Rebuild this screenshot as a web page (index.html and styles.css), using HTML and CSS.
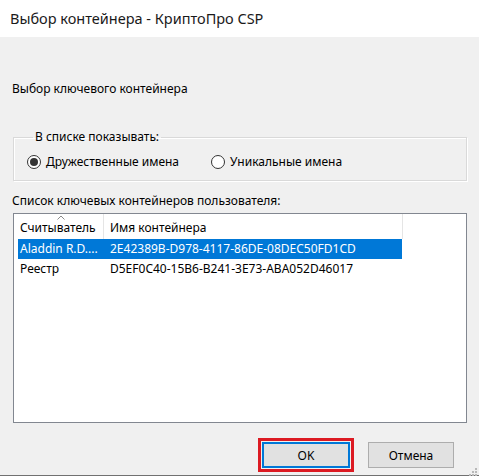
FILE: index.html
```html
<!DOCTYPE html>
<html lang="ru">
<head>
<meta charset="utf-8">
<title>Выбор контейнера</title>
<link rel="stylesheet" href="styles.css">
</head>
<body>
<div class="window">
  <div class="titlebar">Выбор контейнера - КриптоПро CSP</div>
  <div class="main">
    <div class="heading">Выбор ключевого контейнера</div>
    <fieldset class="group">
      <legend class="legend">В списке показывать:</legend>
      <div class="options">
        <div class="option"><span class="radio checked"></span><span>Дружественные имена</span></div>
        <div class="option"><span class="radio"></span><span>Уникальные имена</span></div>
      </div>
    </fieldset>
    <div class="list-label">Список ключевых контейнеров пользователя:</div>
    <div class="listbox">
      <div class="list-header">
        <div class="hcell c1">
          <svg class="sort" width="8" height="5" viewBox="0 0 8 5"><polyline points="0.5,4.5 4,1 7.5,4.5" fill="none" stroke="#8a8a8a" stroke-width="1"/></svg>
          Считыватель
        </div>
        <div class="hcell c2">Имя контейнера</div>
      </div>
      <div class="row selected"><div class="cell c1">Aladdin R.D....</div><div class="cell c2">2E42389B-D978-4117-86DE-08DEC50FD1CD</div></div>
      <div class="row"><div class="cell c1">Реестр</div><div class="cell c2">D5EF0C40-15B6-B241-3E73-ABA052D46017</div></div>
    </div>
    <div class="buttons">
      <button class="btn default">OK</button>
      <button class="btn">Отмена</button>
    </div>
  </div>
  <div class="grip">
    <svg width="10" height="10" viewBox="0 0 10 10">
      <rect x="7" y="1" width="2" height="2" fill="#b8b8b8"/>
      <rect x="4" y="4" width="2" height="2" fill="#b8b8b8"/>
      <rect x="7" y="4" width="2" height="2" fill="#b8b8b8"/>
      <rect x="1" y="7" width="2" height="2" fill="#b8b8b8"/>
      <rect x="4" y="7" width="2" height="2" fill="#b8b8b8"/>
      <rect x="7" y="7" width="2" height="2" fill="#b8b8b8"/>
    </svg>
  </div>
</div>
</body>
</html>
```

FILE: styles.css
```css
* { box-sizing: border-box; }
html, body { margin: 0; padding: 0; }
body {
  width: 479px;
  height: 476px;
  overflow: hidden;
  background: #f0f0f0;
  font-family: "Noto Sans", "Open Sans", sans-serif;
  font-size: 12px;
  color: #000;
}
.window {
  position: relative;
  width: 479px;
  height: 476px;
  border-bottom: 1px solid #707070;
}
.titlebar {
  height: 37px;
  background: #fff;
  font-size: 14.5px;
  line-height: 37px;
  padding-left: 10px;
  color: #1a1a1a;
}
.main {
  padding: 0 12px;
  display: flex;
  flex-direction: column;
}
.heading {
  margin-top: 44px;
  line-height: 16px;
}
.group {
  margin: 32px 0 0 1px;
  width: 454px;
  padding: 9px 0 10px 13px;
  border: 1px solid #d9d9d9;
  box-shadow: 1px 1px 0 #fff, inset 1px 1px 0 #fff;
}
.legend {
  padding: 0 2px;
  margin-left: 6px;
  line-height: 16px;
}
.options {
  display: flex;
  gap: 32px;
  line-height: 16px;
}
.option {
  display: flex;
  align-items: center;
  gap: 5px;
}
.radio {
  width: 14px;
  height: 14px;
  border: 1px solid #333;
  border-radius: 50%;
  background: #fff;
  display: flex;
  align-items: center;
  justify-content: center;
}
.radio.checked::after {
  content: "";
  width: 8px;
  height: 8px;
  border-radius: 50%;
  background: #333;
}
.list-label {
  margin-top: 12px;
  line-height: 16px;
}
.listbox {
  margin: 4px 0 0 1px;
  width: 454px;
  height: 210px;
  background: #fff;
  border: 1px solid #828790;
}
.list-header {
  display: flex;
  height: 25px;
  width: 389px;
}
.hcell {
  position: relative;
  line-height: 27px;
  border-right: 1px solid #e5e5e5;
}
.hcell.c1 { width: 90px; padding-left: 6px; }
.hcell.c2 { width: 299px; padding-left: 6px; }
.sort {
  position: absolute;
  left: 43px;
  top: 1px;
}
.row {
  display: flex;
  margin-left: 4px;
  width: 384px;
  height: 20px;
  line-height: 20px;
}
.row.selected {
  background: #0078d7;
  color: #fff;
}
.cell.c1 { width: 86px; padding-left: 2px; white-space: nowrap; overflow: hidden; }
.cell.c2 { width: 298px; padding-left: 6px; white-space: nowrap; }
.buttons {
  display: flex;
  margin-top: 19px;
  padding-left: 250px;
  gap: 18px;
}
.btn {
  font-family: inherit;
  font-size: 12px;
  width: 86px;
  height: 26px;
  background: #e1e1e1;
  border: 1px solid #adadad;
  padding: 0;
  color: #000;
}
.btn.default {
  width: 88px;
  border: 2px solid #0078d7;
  outline: 3px solid #dc1a22;
  outline-offset: 1px;
}
.grip {
  position: absolute;
  right: 1px;
  bottom: 1px;
  width: 10px;
  height: 10px;
}
```
